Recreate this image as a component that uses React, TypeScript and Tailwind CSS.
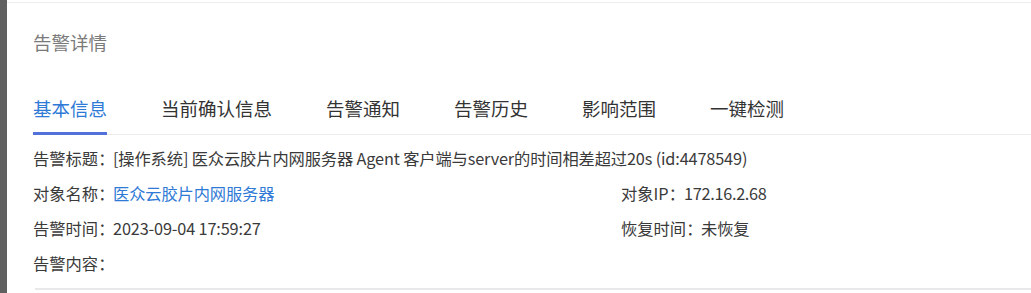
import React from 'react';

const tabs = ['基本信息', '当前确认信息', '告警通知', '告警历史', '影响范围', '一键检测'];

function Field({ label, children }: { label: string; children?: React.ReactNode }) {
  return (
    <div className="flex h-[35px] items-center whitespace-nowrap text-[#3a3a3a]">
      <span className="w-[80px] shrink-0">{label}：</span>
      <span className="tracking-[-0.15px]">{children}</span>
    </div>
  );
}

export default function App() {
  return (
    <div
      className="flex h-[293px] w-[1031px] overflow-hidden bg-white"
      style={{ fontFamily: '"Noto Sans CJK SC", "Noto Sans", sans-serif' }}
    >
      {/* dimmed backdrop edge */}
      <div className="w-[7px] shrink-0 bg-[#606060]" />

      <div className="flex min-w-0 flex-1 flex-col">
        <div className="mt-[2px] h-px w-full bg-[#eeeeee]" />

        {/* header */}
        <div className="flex h-[80px] items-center pl-[26px] text-[18.5px] text-[#7a7a7a]">告警详情</div>

        {/* tabs */}
        <div className="ml-[26px] flex h-[52px] gap-[54px] border-b border-[#ececec] text-[18.5px]">
          {tabs.map((t, i) => (
            <div key={t} className="relative h-full pt-[12px]">
              <span className={`leading-[24px] ${i === 0 ? 'text-[#2f7ad6]' : 'text-[#333333]'}`}>{t}</span>
              {i === 0 && <div className="absolute bottom-[-1px] left-0 right-0 h-[3px] bg-[#5271db]" />}
            </div>
          ))}
        </div>

        {/* details */}
        <div className="ml-[26px] pt-[6px] text-[16.3px]">
          <Field label="告警标题">
            [操作系统] 医众云胶片内网服务器 Agent 客户端与server的时间相差超过20s (id:4478549)
          </Field>
          <div className="grid grid-cols-[588px_1fr]">
            <Field label="对象名称">
              <span className="text-[#2f7ad6]">医众云胶片内网服务器</span>
            </Field>
            <div className="flex h-[35px] items-center whitespace-nowrap text-[#3a3a3a]">
              <span className="w-[63px] shrink-0">对象IP：</span>
              <span className="tracking-[-0.3px]">172.16.2.68</span>
            </div>
            <Field label="告警时间">2023-09-04 17:59:27</Field>
            <Field label="恢复时间">未恢复</Field>
          </div>
          <Field label="告警内容" />
        </div>

        <div className="ml-[28px] mt-[7px] h-[2px] bg-[#e9e9ec]" />
      </div>
    </div>
  );
}
